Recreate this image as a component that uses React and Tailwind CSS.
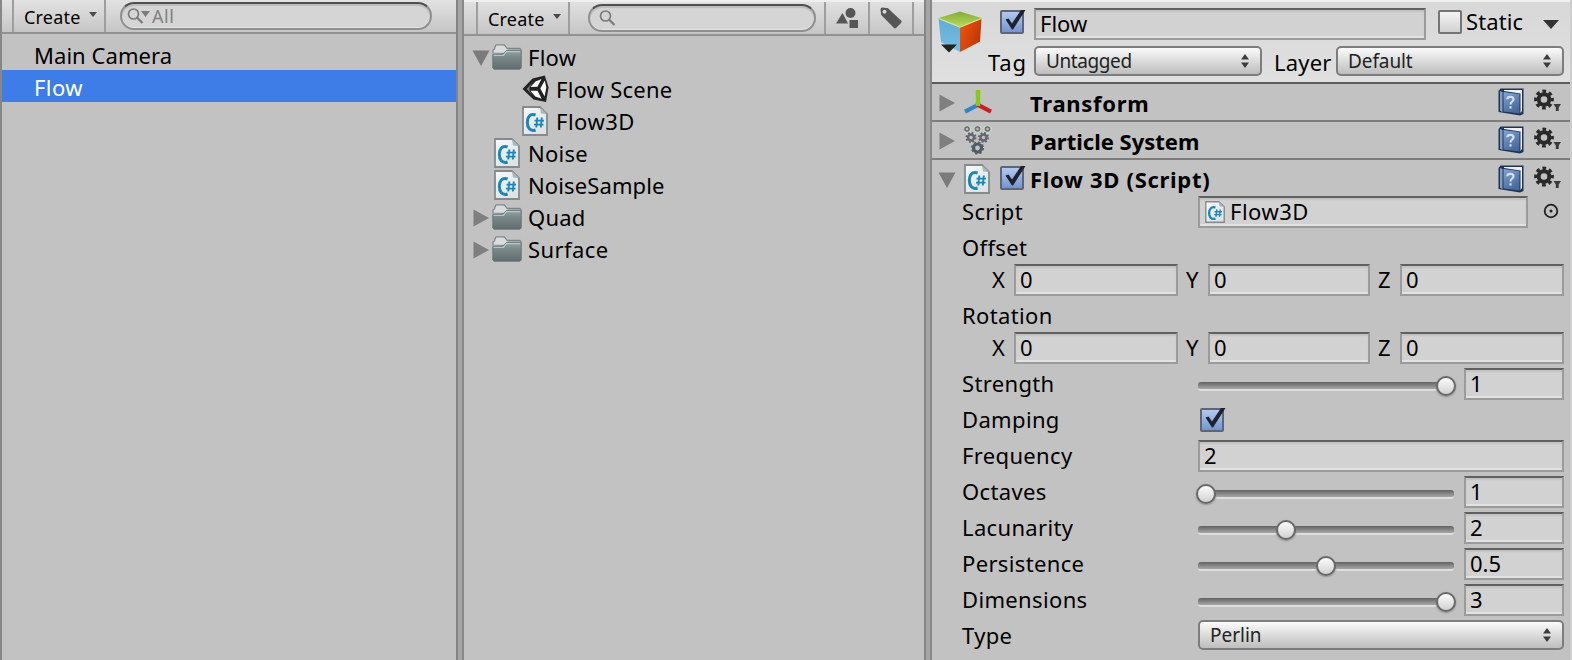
import React from "react";

function CsIcon({ className = "w-[26px] h-[30px]" }) {
  return (
    <svg viewBox="0 0 26 30" preserveAspectRatio="none" className={"block shrink-0 " + className}>
      <defs>
        <linearGradient id="page" x1="0" y1="0" x2="0.6" y2="1">
          <stop offset="0" stopColor="#f7f9fa" />
          <stop offset="1" stopColor="#dde3e6" />
        </linearGradient>
      </defs>
      <path d="M1 1H18L25 8V29H1Z" fill="url(#page)" stroke="#858a8c" strokeWidth="1.8" />
      <path d="M18 1L19 7.5L25 8Z" fill="#a9b6bb" />
      <path d="M13.6 9C8 7 5.300 11.5 5.300 16.3C5.300 21.500 8 25.800 13.600 24" fill="none" stroke="#1a87b8" strokeWidth="3" />
      <path d="M15.300 11.500L14.300 21.500M19.800 11.500L18.800 21.500M12.500 14.600H22M12 18.600H21.500" fill="none" stroke="#1a87b8" strokeWidth="1.900" />
    </svg>
  );
}

function FolderIcon() {
  return (
    <svg viewBox="0 0 30 26" className="block h-[26px] w-[30px] shrink-0">
      <defs>
        <linearGradient id="folder" x1="0" y1="0" x2="0" y2="1">
          <stop offset="0" stopColor="#93a1a3" />
          <stop offset="0.35" stopColor="#7b898b" />
          <stop offset="1" stopColor="#5f6d6f" />
        </linearGradient>
      </defs>
      <path d="M1 9V6L2.500 5L3.500 1.500Q4 0.800 5 0.800H11.500Q12.500 0.800 13 1.600L15 4.300H28L29 5.500V10Z" fill="#d9dddd" stroke="#7f8687" strokeWidth="1.200" />
      <path d="M16 5.200H28.500V9H12Z" fill="#8f9a9b" />
      <path d="M0.800 10.500H11L14 6.800H29.200V24L28 25.200H2L0.800 24Z" fill="url(#folder)" stroke="#667173" strokeWidth="0.900" />
      <path d="M1.600 11.300H11.400L14.400 7.600H28.400" fill="none" stroke="#b9c5c6" strokeWidth="1.300" />
    </svg>
  );
}

function SceneIcon() {
  return (
    <svg viewBox="0 0 28 28" className="block h-7 w-7 shrink-0">
      <path d="M0.500 14L10.500 3.500L22.800 0.600L26.600 12.500L24 27L11.500 24.500Z" fill="#222" />
      <path d="M13.500 6.500L19.500 4L15.500 11.800L8.500 12Z" fill="#fafafa" />
      <path d="M22.800 5.500L24.300 12.500L22.600 21.500L18.300 13.500Z" fill="#fafafa" />
      <path d="M8.500 15.700L15.500 15.800L19.700 23.700L13.300 21.500Z" fill="#fafafa" />
      <path d="M4.800 14L10.800 7.200L7.400 12.400L7.400 15.400L10.800 20.500Z" fill="#888" />
    </svg>
  );
}

function Triangle({ open }) {
  return (
    <svg viewBox="0 0 18 18" className="block h-[18px] w-[18px] shrink-0">
      {open ? <path d="M0.500 1.500H17.500L9 17Z" fill="#7b7b7b" /> : <path d="M1.500 0.500L17 9L1.500 17.500Z" fill="#7f7f7f" />}
    </svg>
  );
}

function Caret({ className = "" }) {
  return (
    <svg viewBox="0 0 8 5" className={"block h-[5px] w-2 shrink-0 " + className}>
      <path d="M0 0H8L4 5Z" fill="#4a4a4a" />
    </svg>
  );
}

function Magnifier({ menu }) {
  return (
    <svg viewBox="0 0 24 18" className="block h-[18px] w-6 shrink-0">
      <circle cx="6.500" cy="7" r="5" fill="none" stroke="#7b7b7b" strokeWidth="1.700" />
      <path d="M10 10.500L15.500 16" stroke="#7b7b7b" strokeWidth="2.200" />
      {menu && <path d="M14 4H23L18.500 10Z" fill="#7b7b7b" />}
    </svg>
  );
}

function Divider() {
  return <div className="w-2 shrink-0 border-l-2 border-r-2 border-l-[#858585] border-r-[#888888] bg-[#a5a5a5]" />;
}

function Sep() {
  return <div className="w-0.5 shrink-0 self-stretch bg-[#9e9e9e]" />;
}

function SearchField({ className, children }) {
  return (
    <div className={"flex h-7 shrink-0 items-center rounded-full border-2 border-[#8f8f8f] border-t-[#4f4f4f] bg-[#d5d5d5] shadow-[inset_0_2px_1px_#bcbcbc,inset_0_-1px_0_#e4e4e4] " + className}>
      {children}
    </div>
  );
}

function TreeRow({ className, icon, open, children }) {
  return (
    <div className={"flex h-8 items-center " + className}>
      {open !== undefined && <Triangle open={open} />}
      <div className={"flex shrink-0 justify-start pb-0.5 " + (open !== undefined ? "ml-0.5 w-9" : "w-[34px]")}>{icon}</div>
      <span className="pb-[3px] tracking-[0.25px]">{children}</span>
    </div>
  );
}

function Check({ on }) {
  return (
    <svg viewBox="0 0 26 26" className="block h-[26px] w-[26px] shrink-0">
      <defs>
        <linearGradient id="chk" x1="0" y1="0" x2="0" y2="1">
          <stop offset="0" stopColor="#b5cbf0" />
          <stop offset="1" stopColor="#7292d0" />
        </linearGradient>
        <linearGradient id="nochk" x1="0" y1="0" x2="0" y2="1">
          <stop offset="0" stopColor="#f6f6f6" />
          <stop offset="1" stopColor="#d0d0d0" />
        </linearGradient>
      </defs>
      <rect x="1" y="2" width="22" height="22" rx="1" fill={on ? "url(#chk)" : "url(#nochk)"} stroke={on ? "#5e6676" : "#757575"} strokeWidth="2" />
      {on && <path d="M5.500 10.500L8.500 9.500L12 14.500L21 1H25.500L13 20.500H12Z" fill="#1d222c" />}
    </svg>
  );
}

function Field({ className = "", children }) {
  return (
    <div className={"flex h-8 items-center border-2 border-[#9b9b9b] border-t-[#606060] bg-[#d2d2d2] pb-0.5 pl-1 shadow-[inset_0_2px_1px_#c2c2c2,inset_0_-2px_0_#e2e2e2] " + className}>
      {children}
    </div>
  );
}

function Popup({ className = "", children }) {
  return (
    <div className={"flex h-[30px] items-center justify-between rounded-[5px] border-2 border-[#7d7d7d] bg-linear-to-b from-[#fbfbfb] to-[#bebebe] pr-[11px] pl-2.5 text-[19px] text-[#222] " + className}>
      <span className="pt-px">{children}</span>
      <svg viewBox="0 0 8 14" className="block h-3.5 w-2">
        <path d="M0 5.500L4 0L8 5.500ZM0 8.500L4 14L8 8.500Z" fill="#3c3c3c" />
      </svg>
    </div>
  );
}

function Slider({ value }) {
  return (
    <div className="relative h-8 w-64 shrink-0">
      <div className="mt-3.5 h-[9px] rounded-[3px] border-b-2 border-b-[#dedede] bg-linear-to-b from-[#626262] via-[#858585] to-[#a8a8a8]" />
      <div
        className="absolute top-[8px] h-5 w-5 -translate-x-1/2 rounded-full border-2 border-[#686868] bg-linear-to-b from-[#fbfbfb] to-[#d2d2d2] shadow-[0_1px_2px_#8c8c8c]"
        style={{ left: 8 + value * 240 }}
      />
    </div>
  );
}

function Prop({ label, className = "", children }) {
  return (
    <div className={"flex h-8 items-center pl-[30px] " + className}>
      <div className="w-[236px] shrink-0 pb-0.5 tracking-[0.35px]">{label}</div>
      {children}
    </div>
  );
}

function SliderProp({ label, value, text }) {
  return (
    <Prop label={label}>
      <Slider value={value} />
      <Field className="ml-2.5 w-[100px] shrink-0">{text}</Field>
    </Prop>
  );
}

function Vector() {
  return (
    <div className="flex h-8 items-center pl-[60px]">
      <span className="w-[22px] pb-0.5">X</span>
      <Field className="w-[164px]">0</Field>
      <span className="ml-2 w-[22px] pb-0.5">Y</span>
      <Field className="w-[162px]">0</Field>
      <span className="ml-2 w-[22px] pb-0.5">Z</span>
      <Field className="w-[164px]">0</Field>
    </div>
  );
}

function BookIcon() {
  return (
    <svg viewBox="0 0 26 28" className="block h-7 w-[26px] shrink-0">
      <defs>
        <linearGradient id="book" x1="0" y1="0" x2="0.500" y2="1">
          <stop offset="0" stopColor="#84a5cf" />
          <stop offset="1" stopColor="#47699c" />
        </linearGradient>
      </defs>
      <path d="M2.500 0.500H25.500V26L22 27.500L0.500 24V3Z" fill="#1f3354" />
      <path d="M6 2H24V23L22.500 25V5.500L6 3Z" fill="#edf1f7" />
      <path d="M2 3L4.500 4V24L2 22.800Z" fill="#7f9dc8" />
      <path d="M5.500 4L21.500 6V25.500L5.500 23.500Z" fill="url(#book)" />
      <path d="M9.300 11.200C9.500 8 15.500 8 15.500 11.200C15.500 13.500 12.500 13.600 12.500 16.500M12.500 18.200V20.600" fill="none" stroke="#d3dfee" strokeWidth="2.200" />
    </svg>
  );
}

function GearIcon() {
  return (
    <svg viewBox="0 0 28 24" className="block h-6 w-7 shrink-0">
      <circle cx="10" cy="10.500" r="5.300" fill="none" stroke="#2a2a2a" strokeWidth="4" />
      <circle cx="10" cy="10.500" r="8.200" fill="none" stroke="#2a2a2a" strokeWidth="3.400" strokeDasharray="3.600 2.840" strokeDashoffset="1.800" />
      <path d="M19.500 15H27L24.700 18.500V22H21.800V18.500Z" fill="#3a3a3a" />
    </svg>
  );
}

function TransformIcon() {
  return (
    <svg viewBox="0 0 28 26" className="block h-[26px] w-7 shrink-0">
      <path d="M14 16V1" stroke="#86c81c" strokeWidth="4.500" />
      <path d="M14.500 15.700L1 22.700" stroke="#2f86c4" strokeWidth="4.200" />
      <path d="M13.500 15.700L27 22.700" stroke="#cc1f1f" strokeWidth="4.200" />
      <path d="M14 13V17" stroke="#86c81c" strokeWidth="4.500" />
    </svg>
  );
}

function ParticleIcon() {
  const rings = [
    [3, 3, 2, 1.6], [13.500, 3, 2, 1.6], [23.500, 3, 2, 1.6],
    [7, 11.500, 3, 2.400], [19.500, 11.500, 3, 2.400], [13.500, 22, 4, 3.200],
  ];
  return (
    <svg viewBox="0 0 28 29" className="block h-[29px] w-7 shrink-0">
      {rings.map(([x, y, r, w], i) => (
        <g key={i} fill="none">
          <circle cx={x} cy={y} r={r + 1.500} stroke="#c3d3c5" strokeWidth="2" />
          <circle cx={x} cy={y} r={r} stroke={i < 3 ? "#6d6d70" : i < 5 ? "#6b6373" : "#525a66"} strokeWidth={w} />
          {i > 2 && <circle cx={x} cy={y} r={r + 1.700} stroke="#5d5f69" strokeWidth="1.700" strokeDasharray={i === 5 ? "2.400 2.070" : "1.900 1.790"} />}
        </g>
      ))}
    </svg>
  );
}

function CubeIcon() {
  return (
    <svg viewBox="0 0 44 42" className="block h-[42px] w-11 shrink-0">
      <defs>
        <linearGradient id="cubeBlue" x1="0" y1="0" x2="0" y2="1">
          <stop offset="0" stopColor="#62abd2" />
          <stop offset="1" stopColor="#74bfe6" />
        </linearGradient>
        <linearGradient id="cubeRed" x1="0" y1="0" x2="1" y2="0.600">
          <stop offset="0" stopColor="#ee5a12" />
          <stop offset="1" stopColor="#c23304" />
        </linearGradient>
        <linearGradient id="cubeTop" x1="0" y1="0" x2="0" y2="1">
          <stop offset="0" stopColor="#83ad37" />
          <stop offset="1" stopColor="#b4d95c" />
        </linearGradient>
      </defs>
      <path d="M0.500 7L22 15V41L3 31Z" fill="url(#cubeBlue)" />
      <path d="M43.500 7L22 15V41L42 30.500Z" fill="url(#cubeRed)" />
      <path d="M0.500 7L22 0.500L43.500 7L22 15.500Z" fill="url(#cubeTop)" />
      <path d="M0.500 7.500L22 16L43.500 7.500" fill="none" stroke="#d5e79a" strokeWidth="1.200" />
      <path d="M3 33.500H19L11 41.500Z" fill="#222" />
    </svg>
  );
}

function ComponentHeader({ open, icon, check, title, last, tracking = "" }) {
  return (
    <div className={"flex h-[38px] items-center pr-2 pl-1.5 " + (last ? "" : "border-b-2 border-b-[#7d7d7d]")}>
      <div className="pt-0.5"><Triangle open={open} /></div>
      <div className="ml-2 w-9 shrink-0">{icon}</div>
      <div className="w-[30px] shrink-0 pb-0.5">{check && <Check on />}</div>
      <span className={"grow font-bold " + (last ? "" : "pt-0.5 ") + tracking}>{title}</span>
      <BookIcon />
      <div className="ml-2.5 pb-0.5"><GearIcon /></div>
    </div>
  );
}

function CreateButton({ className }) {
  return (
    <div className={"flex shrink-0 items-center pt-0.5 text-[18px] " + className}>
      <span className="tracking-[0.2px]">Create</span>
      <Caret className="mb-1.5 ml-2" />
    </div>
  );
}

export default function App() {
  return (
    <div className="flex h-[660px] w-[1572px] overflow-hidden bg-[#c2c2c2] font-['Noto_Sans',sans-serif] text-[22px] leading-none whitespace-nowrap text-black">
      <div className="w-0.5 shrink-0 bg-[#878787]" />
      <section className="flex w-[454px] shrink-0 flex-col">
        <div className="flex h-[34px] shrink-0 items-stretch border-b-2 border-b-[#929292] bg-linear-to-b from-[#e2e2e2] to-[#c6c6c6] pl-2.5">
          <Sep />
          <CreateButton className="w-[90px] pl-2.5" />
          <Sep />
          <SearchField className="mt-0.5 ml-3.5 w-[312px] pl-[5px]">
            <Magnifier menu />
            <span className="ml-px text-[18px] tracking-[0.6px] text-[#818181]">All</span>
          </SearchField>
        </div>
        <div className="pt-1">
          <div className="flex h-8 items-center pt-0.5 pl-8"><span className="tracking-[0.05px]">Main Camera</span></div>
          <div className="flex h-8 items-center bg-[#3e7de7] pt-0.5 pl-8 tracking-[0.4px] text-white">Flow</div>
        </div>
      </section>
      <Divider />
      <section className="flex w-[460px] shrink-0 flex-col">
        <div className="h-0.5 shrink-0 bg-[#efefef]" />
        <div className="flex h-[34px] shrink-0 items-stretch border-b-2 border-b-[#929292] bg-linear-to-b from-[#e0e0e0] to-[#c6c6c6] pl-3">
          <Sep />
          <CreateButton className="w-[90px] pl-2.5" />
          <Sep />
          <SearchField className="mt-0.5 ml-[18px] w-[228px] pl-[9px]">
            <Magnifier />
          </SearchField>
          <div className="w-2" />
          <Sep />
          <div className="flex w-[42px] items-center justify-center">
            <svg viewBox="0 0 22 20" className="h-5 w-[22px]">
              <circle cx="14.500" cy="5" r="5" fill="#565656" />
              <path d="M6.500 5L12 15.500H0Z" fill="#565656" />
              <rect x="13.500" y="12" width="8.500" height="8" fill="#565656" />
            </svg>
          </div>
          <Sep />
          <div className="flex w-[42px] items-center justify-center">
            <svg viewBox="0 0 22 22" className="h-[22px] w-[22px]">
              <path fillRule="evenodd" d="M0.500 2.500Q0.500 0.500 2.500 0.500L8 1.200L21.500 14Q22 15 21 16L16 21Q15 21.800 14 21L1.200 8ZM4.500 2.800A2 2 0 1 0 4.510 2.800Z" fill="#565656" />
            </svg>
          </div>
          <Sep />
        </div>
        <div className="flex flex-col pt-1.5">
          <TreeRow className="pl-2" open icon={<FolderIcon />}>Flow</TreeRow>
          <TreeRow className="pl-[58px]" icon={<SceneIcon />}>Flow Scene</TreeRow>
          <TreeRow className="pl-[58px]" icon={<CsIcon />}><span className="tracking-[0.5px]">Flow3D</span></TreeRow>
          <TreeRow className="pl-[30px]" icon={<CsIcon />}>Noise</TreeRow>
          <TreeRow className="pl-[30px]" icon={<CsIcon />}><span className="tracking-[0.12px]">NoiseSample</span></TreeRow>
          <TreeRow className="pl-2" open={false} icon={<FolderIcon />}>Quad</TreeRow>
          <TreeRow className="pl-2" open={false} icon={<FolderIcon />}><span className="tracking-[0.4px]">Surface</span></TreeRow>
        </div>
      </section>
      <Divider />
      <section className="flex w-[640px] shrink-0 flex-col border-r-2 border-r-[#cecece]">
        <header className="flex h-[84px] shrink-0 border-t-2 border-b-2 border-t-[#efefef] border-b-[#5c5c5c] bg-linear-to-b from-[#d8d8d8] to-[#e0e0e0] pt-1.5 pl-1.5">
          <div className="w-[50px] pt-[3px]"><CubeIcon /></div>
          <div className="flex flex-col gap-1.5">
            <div className="flex h-8 items-center">
              <div className="ml-3 w-[34px] pb-1"><Check on /></div>
              <Field className="w-[392px]">Flow</Field>
              <div className="ml-3 pb-1"><Check /></div>
              <span className="ml-0.5 w-[76px] pb-1.5 tracking-[0.1px]">Static</span>
              <svg viewBox="0 0 18 10" className="h-2.5 w-[18px]"><path d="M1 1H17L9 10Z" fill="#333" /></svg>
            </div>
            <div className="flex h-[30px] items-center">
              <span className="w-[46px] pt-px tracking-[0.9px]">Tag</span>
              <Popup className="w-[228px] tracking-[-0.4px]">Untagged</Popup>
              <span className="ml-3 w-[62px] pt-px tracking-[0.2px]">Layer</span>
              <Popup className="w-[228px] tracking-[-0.1px]">Default</Popup>
            </div>
          </div>
        </header>
        <ComponentHeader open={false} icon={<TransformIcon />} title="Transform" tracking="tracking-[0.7px]" />
        <ComponentHeader open={false} icon={<ParticleIcon />} title="Particle System" />
        <div className="h-9">
          <ComponentHeader open last icon={<CsIcon />} check title="Flow 3D (Script)" tracking="tracking-[0.7px]" />
        </div>
        <div className="flex flex-col gap-1">
          <Prop label="Script">
            <Field className="w-[330px] shrink-0">
              <CsIcon className="mt-0.5 ml-px h-[22px] w-5" />
              <span className="ml-[5px] tracking-[0.5px]">Flow3D</span>
            </Field>
            <svg viewBox="0 0 16 16" className="mb-0.5 ml-[15px] h-4 w-4">
              <circle cx="8" cy="8" r="6.300" fill="none" stroke="#222" strokeWidth="1.800" />
              <circle cx="8" cy="8" r="1.500" fill="#222" />
            </svg>
          </Prop>
          <div>
            <Prop label="Offset" />
            <Vector />
          </div>
          <div>
            <Prop label="Rotation" />
            <Vector />
          </div>
          <SliderProp label="Strength" value={1} text="1" />
          <Prop label="Damping"><div className="ml-0.5"><Check on /></div></Prop>
          <Prop label="Frequency"><Field className="w-[366px]">2</Field></Prop>
          <SliderProp label="Octaves" value={0} text="1" />
          <SliderProp label="Lacunarity" value={0.333} text="2" />
          <SliderProp label="Persistence" value={0.5} text="0.5" />
          <SliderProp label="Dimensions" value={1} text="3" />
          <Prop label="Type"><Popup className="mb-0.5 w-[366px]">Perlin</Popup></Prop>
        </div>
      </section>
    </div>
  );
}
